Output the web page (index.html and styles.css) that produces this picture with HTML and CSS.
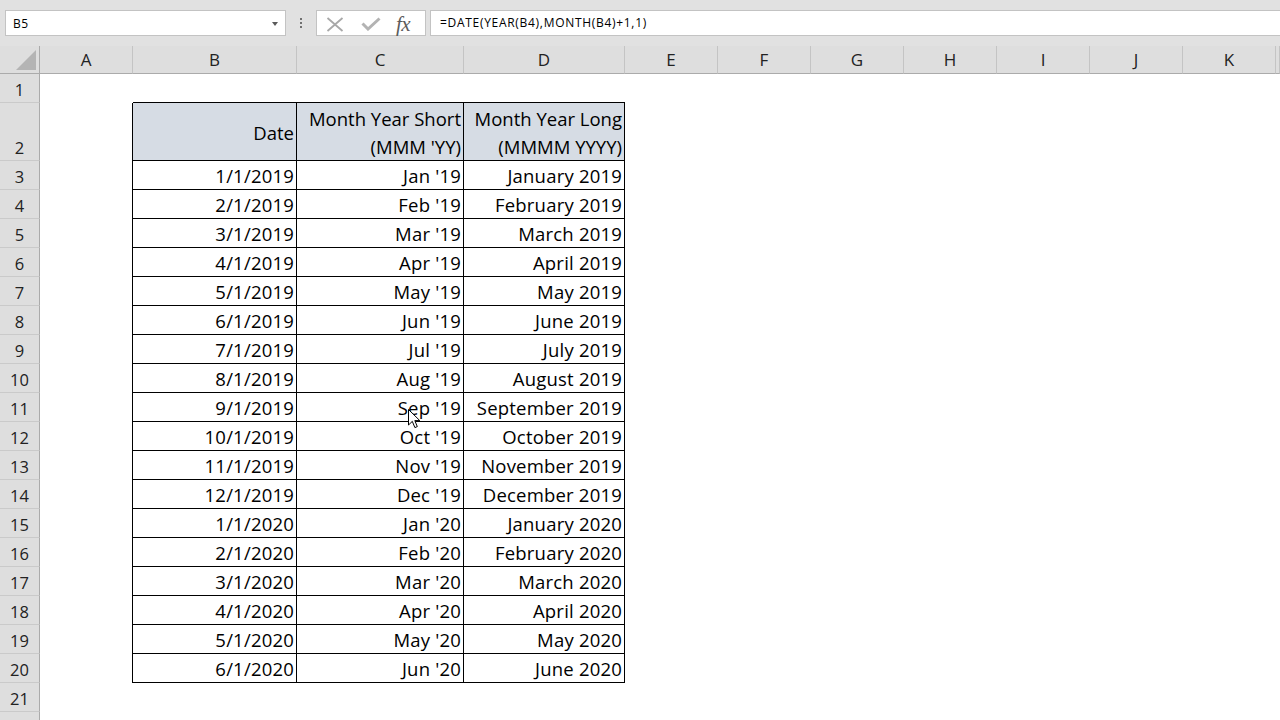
FILE: index.html
```html
<!DOCTYPE html>
<html lang="en">
<head>
  <meta charset="UTF-8">
  <title>Month Year - Excel</title>
  <link rel="stylesheet" href="styles.css">
</head>
<body>
  <!-- formula bar -->
  <div class="toolbar">
    <div class="namebox">
      <span>B5</span>
      <span class="caret"></span>
    </div>
    <div class="grip"><i></i><i></i><i></i></div>
    <div class="fxbox">
      <svg class="ico-x" width="18" height="15" viewBox="0 0 18 15">
        <path d="M1.5 1 L16.5 14 M16.5 1 L1.5 14" stroke="#a8a8a8" stroke-width="1.8" fill="none"/>
      </svg>
      <svg class="ico-ok" width="20" height="14" viewBox="0 0 20 14">
        <path d="M1.5 6.5 L7 12 L18.5 1.5" stroke="#b3b3b3" stroke-width="3" fill="none"/>
      </svg>
      <span class="fx">fx</span>
    </div>
    <div class="formula">=DATE(YEAR(B4),MONTH(B4)+1,1)</div>
  </div>

  <!-- worksheet -->
  <div class="sheet">
    <div class="row colhead">
      <div class="h rh corner"><span class="tri"></span></div>
      <div class="h ca">A</div>
      <div class="h cb">B</div>
      <div class="h cc">C</div>
      <div class="h cd">D</div>
      <div class="h cn">E</div>
      <div class="h cn">F</div>
      <div class="h cn">G</div>
      <div class="h cn">H</div>
      <div class="h cn">I</div>
      <div class="h cn">J</div>
      <div class="h cn">K</div>
      <div class="h cl"></div>
    </div>

    <div class="row">
      <div class="rh">1</div>
      <div class="ca"></div>
      <div class="cb top"></div>
      <div class="cc top"></div>
      <div class="cd top"></div>
    </div>

    <div class="row tall">
      <div class="rh">2</div>
      <div class="ca edge"></div>
      <div class="cb t hd">Date</div>
      <div class="cc t hd">Month Year Short<br>(MMM 'YY)</div>
      <div class="cd t hd">Month Year Long<br>(MMMM YYYY)</div>
    </div>

    <div class="row"><div class="rh">3</div><div class="ca edge"></div><div class="cb t">1/1/2019</div><div class="cc t">Jan '19</div><div class="cd t">January 2019</div></div>
    <div class="row"><div class="rh">4</div><div class="ca edge"></div><div class="cb t">2/1/2019</div><div class="cc t">Feb '19</div><div class="cd t">February 2019</div></div>
    <div class="row"><div class="rh">5</div><div class="ca edge"></div><div class="cb t">3/1/2019</div><div class="cc t">Mar '19</div><div class="cd t">March 2019</div></div>
    <div class="row"><div class="rh">6</div><div class="ca edge"></div><div class="cb t">4/1/2019</div><div class="cc t">Apr '19</div><div class="cd t">April 2019</div></div>
    <div class="row"><div class="rh">7</div><div class="ca edge"></div><div class="cb t">5/1/2019</div><div class="cc t">May '19</div><div class="cd t">May 2019</div></div>
    <div class="row"><div class="rh">8</div><div class="ca edge"></div><div class="cb t">6/1/2019</div><div class="cc t">Jun '19</div><div class="cd t">June 2019</div></div>
    <div class="row"><div class="rh">9</div><div class="ca edge"></div><div class="cb t">7/1/2019</div><div class="cc t">Jul '19</div><div class="cd t">July 2019</div></div>
    <div class="row"><div class="rh">10</div><div class="ca edge"></div><div class="cb t">8/1/2019</div><div class="cc t">Aug '19</div><div class="cd t">August 2019</div></div>
    <div class="row"><div class="rh">11</div><div class="ca edge"></div><div class="cb t">9/1/2019</div><div class="cc t">Sep '19</div><div class="cd t">September 2019</div></div>
    <div class="row"><div class="rh">12</div><div class="ca edge"></div><div class="cb t">10/1/2019</div><div class="cc t">Oct '19</div><div class="cd t">October 2019</div></div>
    <div class="row"><div class="rh">13</div><div class="ca edge"></div><div class="cb t">11/1/2019</div><div class="cc t">Nov '19</div><div class="cd t">November 2019</div></div>
    <div class="row"><div class="rh">14</div><div class="ca edge"></div><div class="cb t">12/1/2019</div><div class="cc t">Dec '19</div><div class="cd t">December 2019</div></div>
    <div class="row"><div class="rh">15</div><div class="ca edge"></div><div class="cb t">1/1/2020</div><div class="cc t">Jan '20</div><div class="cd t">January 2020</div></div>
    <div class="row"><div class="rh">16</div><div class="ca edge"></div><div class="cb t">2/1/2020</div><div class="cc t">Feb '20</div><div class="cd t">February 2020</div></div>
    <div class="row"><div class="rh">17</div><div class="ca edge"></div><div class="cb t">3/1/2020</div><div class="cc t">Mar '20</div><div class="cd t">March 2020</div></div>
    <div class="row"><div class="rh">18</div><div class="ca edge"></div><div class="cb t">4/1/2020</div><div class="cc t">Apr '20</div><div class="cd t">April 2020</div></div>
    <div class="row"><div class="rh">19</div><div class="ca edge"></div><div class="cb t">5/1/2020</div><div class="cc t">May '20</div><div class="cd t">May 2020</div></div>
    <div class="row"><div class="rh">20</div><div class="ca edge"></div><div class="cb t">6/1/2020</div><div class="cc t">Jun '20</div><div class="cd t">June 2020</div></div>

    <div class="row"><div class="rh">21</div></div>
    <div class="row"><div class="rh"></div></div>
  </div>

  <!-- mouse pointer -->
  <svg class="pointer" width="13" height="20" viewBox="0 0 13 20">
    <path d="M0.5 0.5 L0.5 16 L4.3 12.4 L6.9 18.6 L9.3 17.6 L6.8 11.6 L11.8 11.6 Z" fill="#fff" stroke="#000" stroke-width="1" stroke-linejoin="round"/>
  </svg>
</body>
</html>
```

FILE: styles.css
```css
html, body {
  margin: 0;
  padding: 0;
}

body {
  width: 1280px;
  height: 720px;
  overflow: hidden;
  background: #fff;
  font-family: "Open Sans", sans-serif;
  color: #000;
  position: relative;
}

/* ---------- formula bar ---------- */

.toolbar {
  height: 46px;
  background: #e1e1e1;
  display: flex;
  align-items: flex-start;
  box-sizing: border-box;
  padding: 10px 0 0 5px;
}

.namebox,
.fxbox,
.formula {
  height: 26px;
  box-sizing: border-box;
  background: #fff;
  border: 1px solid #c3c3c3;
}

.namebox {
  width: 281px;
  display: flex;
  align-items: center;
  justify-content: space-between;
  padding: 0 7px 0 7px;
  font-size: 12px;
  letter-spacing: 0.5px;
}

.caret {
  width: 0;
  height: 0;
  border-left: 3.5px solid transparent;
  border-right: 3.5px solid transparent;
  border-top: 4px solid #5a5a5a;
  margin-top: 1px;
}

.grip {
  width: 30px;
  height: 26px;
  display: flex;
  flex-direction: column;
  align-items: center;
  justify-content: center;
  gap: 2px;
}

.grip i {
  display: block;
  width: 2px;
  height: 2px;
  background: #707070;
}

.fxbox {
  width: 110px;
  display: flex;
  align-items: center;
  padding-left: 9px;
}

.ico-x {
  margin-top: 2px;
}

.ico-ok {
  margin-left: 17px;
  margin-top: 2px;
}

.fx {
  margin-left: 15px;
  font-family: "Liberation Serif", serif;
  font-style: italic;
  font-size: 21px;
  line-height: 20px;
  color: #5c5c5c;
  letter-spacing: -0.5px;
  margin-top: 1px;
}

.formula {
  flex: 1;
  margin-left: 4px;
  margin-right: -10px;
  padding-left: 9px;
  font-size: 12px;
  line-height: 24px;
  letter-spacing: 0.7px;
  white-space: nowrap;
}

/* ---------- sheet ---------- */

.row {
  display: flex;
  height: 29px;
}

.row.tall {
  height: 58px;
}

.row > div {
  box-sizing: border-box;
  flex-shrink: 0;
  height: 100%;
}

.rh { width: 40px; }
.ca { width: 93px; }
.cb { width: 164px; }
.cc { width: 167px; }
.cd { width: 161px; }
.cn { width: 93px; }
.cl { flex: 1; }

.colhead {
  height: 28px;
}

.colhead .h {
  background: #dedede;
  border-right: 1px solid #c4c4c4;
  border-bottom: 1px solid #ababab;
  text-align: center;
  font-size: 17px;
  line-height: 27px;
  color: #222;
}

.colhead .corner {
  border-right-color: #ababab;
  position: relative;
}

.tri {
  position: absolute;
  left: 16px;
  top: 4px;
  width: 0;
  height: 0;
  border-left: 20px solid transparent;
  border-bottom: 20px solid #b4b4b4;
}

.rh {
  background: #dedede;
  border-right: 1px solid #ababab;
  border-bottom: 1px solid #cacaca;
  display: flex;
  align-items: flex-end;
  justify-content: center;
  padding-bottom: 2px;
  font-size: 16.5px;
  line-height: 20px;
  color: #222;
}

/* bordered table B2:D20 */

.t {
  border-right: 1px solid #000;
  border-bottom: 1px solid #000;
  display: flex;
  align-items: flex-end;
  justify-content: flex-end;
  padding: 0 2px 3px 0;
  font-size: 18.5px;
  line-height: 20px;
  letter-spacing: 0.2px;
  white-space: nowrap;
}

.edge {
  border-right: 1px solid #000;
}

.top {
  border-bottom: 1px solid #000;
}

.t.hd {
  background: #d6dce4;
  align-items: center;
  text-align: right;
  padding: 2px 2px 0 0;
  line-height: 28px;
  letter-spacing: 0;
}

.pointer {
  position: absolute;
  left: 408px;
  top: 409px;
}
```
